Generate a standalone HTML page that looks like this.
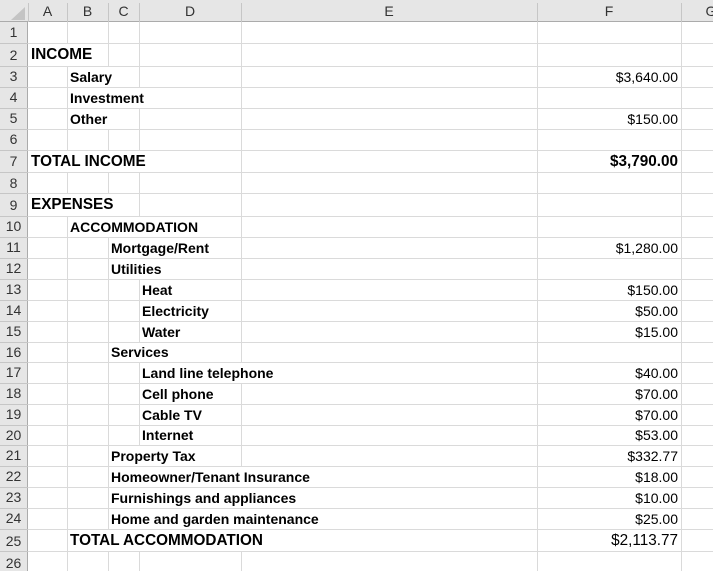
<!DOCTYPE html>
<html><head><meta charset="utf-8"><style>
*{margin:0;padding:0;box-sizing:border-box}
body{width:713px;height:571px;overflow:hidden;background:#fff;position:relative;font-family:"Liberation Sans",Arial,sans-serif;color:#000}
.hdr{position:absolute;left:0;top:0;width:713px;height:22px;background:#e6e6e6;border-bottom:1px solid #ababab}
.rh{position:absolute;left:0;top:22px;width:28px;height:549px;background:#e6e6e6;border-right:1px solid #ababab}
.cl{position:absolute;top:0;font-size:14px;color:#333;text-align:center;line-height:23px}
.cs{position:absolute;top:3px;width:1px;height:19px;background:#c6c6c6}
.vl{position:absolute;top:22px;width:1px;height:549px;background:#dadada}
.hl{position:absolute;left:28px;width:685px;height:1px;background:#dadada}
.hls{position:absolute;left:0;width:28px;height:1px;background:#c6c6c6}
.rn{position:absolute;left:0;width:27px;text-align:center;font-size:14px;color:#333}
.t{position:absolute;background:#fff;font-weight:bold;font-size:14px;white-space:nowrap;padding-right:3px}
.b{font-size:15.3px}
.v{position:absolute;right:35px;font-size:14px;white-space:nowrap;text-align:right}
</style></head><body>
<div class="hdr"></div>
<svg style="position:absolute;left:10px;top:7px" width="16" height="14"><polygon points="15,0 15,13 1,13" fill="#c4c4c4"/></svg>
<div class="cs" style="left:28px"></div><div class="cs" style="left:67px"></div><div class="cs" style="left:108px"></div><div class="cs" style="left:139px"></div><div class="cs" style="left:241px"></div><div class="cs" style="left:537px"></div><div class="cs" style="left:681px"></div>
<div class="cl" style="left:28px;width:39px">A</div>
<div class="cl" style="left:67px;width:41px">B</div>
<div class="cl" style="left:108px;width:31px">C</div>
<div class="cl" style="left:139px;width:102px">D</div>
<div class="cl" style="left:241px;width:296px">E</div>
<div class="cl" style="left:537px;width:144px">F</div>
<div class="cl" style="left:681px;width:60px">G</div>
<div class="rh"></div>
<div class="vl" style="left:67px"></div><div class="vl" style="left:108px"></div><div class="vl" style="left:139px"></div><div class="vl" style="left:241px"></div><div class="vl" style="left:537px"></div><div class="vl" style="left:681px"></div>

<div class="hl" style="top:43px"></div><div class="hl" style="top:66px"></div><div class="hl" style="top:87px"></div><div class="hl" style="top:108px"></div><div class="hl" style="top:129px"></div><div class="hl" style="top:150px"></div><div class="hl" style="top:172px"></div><div class="hl" style="top:193px"></div><div class="hl" style="top:216px"></div><div class="hl" style="top:237px"></div><div class="hl" style="top:258px"></div><div class="hl" style="top:279px"></div><div class="hl" style="top:300px"></div><div class="hl" style="top:321px"></div><div class="hl" style="top:342px"></div><div class="hl" style="top:362px"></div><div class="hl" style="top:383px"></div><div class="hl" style="top:404px"></div><div class="hl" style="top:425px"></div><div class="hl" style="top:445px"></div><div class="hl" style="top:466px"></div><div class="hl" style="top:487px"></div><div class="hl" style="top:508px"></div><div class="hl" style="top:529px"></div><div class="hl" style="top:551px"></div>
<div class="hls" style="top:43px"></div><div class="hls" style="top:66px"></div><div class="hls" style="top:87px"></div><div class="hls" style="top:108px"></div><div class="hls" style="top:129px"></div><div class="hls" style="top:150px"></div><div class="hls" style="top:172px"></div><div class="hls" style="top:193px"></div><div class="hls" style="top:216px"></div><div class="hls" style="top:237px"></div><div class="hls" style="top:258px"></div><div class="hls" style="top:279px"></div><div class="hls" style="top:300px"></div><div class="hls" style="top:321px"></div><div class="hls" style="top:342px"></div><div class="hls" style="top:362px"></div><div class="hls" style="top:383px"></div><div class="hls" style="top:404px"></div><div class="hls" style="top:425px"></div><div class="hls" style="top:445px"></div><div class="hls" style="top:466px"></div><div class="hls" style="top:487px"></div><div class="hls" style="top:508px"></div><div class="hls" style="top:529px"></div><div class="hls" style="top:551px"></div>

<div class="rn" style="top:24px">1</div><div class="rn" style="top:47px">2</div><div class="rn" style="top:68px">3</div><div class="rn" style="top:89px">4</div><div class="rn" style="top:110px">5</div><div class="rn" style="top:131px">6</div><div class="rn" style="top:153px">7</div><div class="rn" style="top:175px">8</div><div class="rn" style="top:197px">9</div><div class="rn" style="top:218px">10</div><div class="rn" style="top:239px">11</div><div class="rn" style="top:260px">12</div><div class="rn" style="top:281px">13</div><div class="rn" style="top:302px">14</div><div class="rn" style="top:323px">15</div><div class="rn" style="top:344px">16</div><div class="rn" style="top:364px">17</div><div class="rn" style="top:385px">18</div><div class="rn" style="top:406px">19</div><div class="rn" style="top:427px">20</div><div class="rn" style="top:447px">21</div><div class="rn" style="top:468px">22</div><div class="rn" style="top:489px">23</div><div class="rn" style="top:510px">24</div><div class="rn" style="top:533px">25</div><div class="rn" style="top:555px">26</div>

<div class="t b" style="left:29px;top:44px;height:22px;padding-left:2px;line-height:22px">INCOME</div>
<div class="t" style="left:68px;top:67px;height:20px;padding-left:2px;line-height:20px">Salary</div>
<div class="t" style="left:68px;top:88px;height:20px;padding-left:2px;line-height:20px">Investment</div>
<div class="t" style="left:68px;top:109px;height:20px;padding-left:2px;line-height:20px">Other</div>
<div class="t b" style="left:29px;top:151px;height:21px;padding-left:2px;line-height:21px">TOTAL INCOME</div>
<div class="t b" style="left:29px;top:194px;height:22px;padding-left:2px;line-height:22px">EXPENSES</div>
<div class="t" style="left:68px;top:217px;height:20px;padding-left:2px;line-height:20px">ACCOMMODATION</div>
<div class="t" style="left:109px;top:238px;height:20px;padding-left:2px;line-height:20px">Mortgage/Rent</div>
<div class="t" style="left:109px;top:259px;height:20px;padding-left:2px;line-height:20px">Utilities</div>
<div class="t" style="left:140px;top:280px;height:20px;padding-left:2px;line-height:20px">Heat</div>
<div class="t" style="left:140px;top:301px;height:20px;padding-left:2px;line-height:20px">Electricity</div>
<div class="t" style="left:140px;top:322px;height:20px;padding-left:2px;line-height:20px">Water</div>
<div class="t" style="left:109px;top:343px;height:19px;padding-left:2px;line-height:19px">Services</div>
<div class="t" style="left:140px;top:363px;height:20px;padding-left:2px;line-height:20px">Land line telephone</div>
<div class="t" style="left:140px;top:384px;height:20px;padding-left:2px;line-height:20px">Cell phone</div>
<div class="t" style="left:140px;top:405px;height:20px;padding-left:2px;line-height:20px">Cable TV</div>
<div class="t" style="left:140px;top:426px;height:19px;padding-left:2px;line-height:19px">Internet</div>
<div class="t" style="left:109px;top:446px;height:20px;padding-left:2px;line-height:20px">Property Tax</div>
<div class="t" style="left:109px;top:467px;height:20px;padding-left:2px;line-height:20px">Homeowner/Tenant Insurance</div>
<div class="t" style="left:109px;top:488px;height:20px;padding-left:2px;line-height:20px">Furnishings and appliances</div>
<div class="t" style="left:109px;top:509px;height:20px;padding-left:2px;line-height:20px">Home and garden maintenance</div>
<div class="t b" style="left:68px;top:530px;height:21px;padding-left:2px;line-height:21px">TOTAL ACCOMMODATION</div>

<div class="v" style="top:67px;line-height:20px">$3,640.00</div>
<div class="v" style="top:109px;line-height:20px">$150.00</div>
<div class="v" style="top:151px;line-height:21px;font-weight:bold;font-size:15.3px">$3,790.00</div>
<div class="v" style="top:238px;line-height:20px">$1,280.00</div>
<div class="v" style="top:280px;line-height:20px">$150.00</div>
<div class="v" style="top:301px;line-height:20px">$50.00</div>
<div class="v" style="top:322px;line-height:20px">$15.00</div>
<div class="v" style="top:363px;line-height:20px">$40.00</div>
<div class="v" style="top:384px;line-height:20px">$70.00</div>
<div class="v" style="top:405px;line-height:20px">$70.00</div>
<div class="v" style="top:426px;line-height:19px">$53.00</div>
<div class="v" style="top:446px;line-height:20px">$332.77</div>
<div class="v" style="top:467px;line-height:20px">$18.00</div>
<div class="v" style="top:488px;line-height:20px">$10.00</div>
<div class="v" style="top:509px;line-height:20px">$25.00</div>
<div class="v" style="top:530px;line-height:21px;font-size:15.3px">$2,113.77</div>
</body></html>
